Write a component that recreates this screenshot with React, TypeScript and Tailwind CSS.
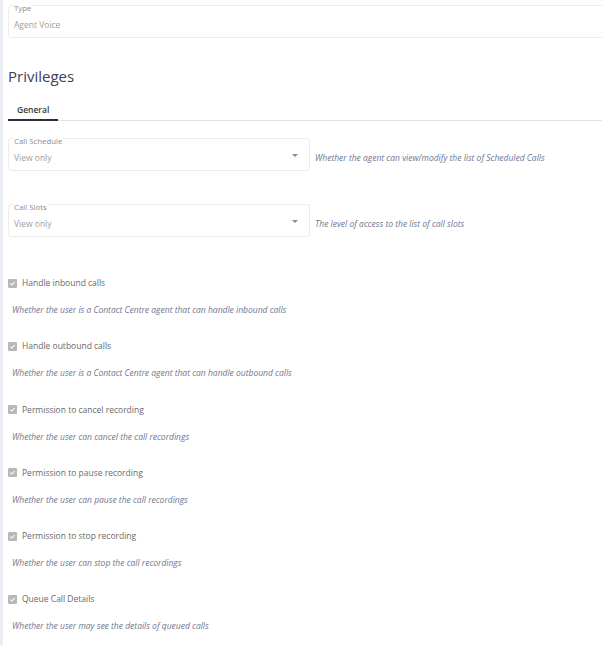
const font = "font-['Open_Sans',_'Noto_Sans',_sans-serif]";

const privileges = [
  { name: "Handle inbound calls", help: "Whether the user is a Contact Centre agent that can handle inbound calls" },
  { name: "Handle outbound calls", help: "Whether the user is a Contact Centre agent that can handle outbound calls" },
  { name: "Permission to cancel recording", help: "Whether the user can cancel the call recordings" },
  { name: "Permission to pause recording", help: "Whether the user can pause the call recordings" },
  { name: "Permission to stop recording", help: "Whether the user can stop the call recordings" },
  { name: "Queue Call Details", help: "Whether the user may see the details of queued calls" },
];

const selects = [
  { label: "Call Schedule", value: "View only", help: "Whether the agent can view/modify the list of Scheduled Calls", mt: "mt-[12px]" },
  { label: "Call Slots", value: "View only", help: "The level of access to the list of call slots", mt: "mt-[28px]" },
];

function Field({ label, value, arrow, className }: { label: string; value: string; arrow?: boolean; className?: string }) {
  return (
    <fieldset className={`min-w-0 rounded-[3px] border border-[#ececec] px-[5px] pb-[6px] ${className ?? ""}`}>
      <legend className="-ml-[1px] px-[1px] text-[7.8px] leading-[10px] text-[#8c8c8c]">
        <span className="relative top-[3px]">{label}</span>
      </legend>
      <div className="mt-[9px] flex items-center justify-between text-[8.5px] leading-[12px] text-[#a0a0a0]">
        <span>{value}</span>
        {arrow && (
          <svg width="6" height="3" viewBox="0 0 6 3" className="mr-[6px] -mt-[6px]">
            <path d="M0 0h6L3 3z" fill="#8a8a8a" />
          </svg>
        )}
      </div>
    </fieldset>
  );
}

function Check() {
  return (
    <span className="flex h-[9px] w-[9px] items-center justify-center rounded-[1px] bg-[#b8b8b8]">
      <svg width="7" height="7" viewBox="0 0 10 10">
        <path d="M2 5.2l2 2L8 3" fill="none" stroke="#fff" strokeWidth="1.6" />
      </svg>
    </span>
  );
}

export default function App() {
  return (
    <div className={`flex min-h-[645px] w-[602px] overflow-hidden bg-white ${font}`}>
      <div className="w-[3px] shrink-0 bg-[#e9edf3]" />
      <div className="flex-1 pl-[5px]">
        <Field label="Type" value="Agent Voice" className="-mr-[4px]" />

        <h2 className="mt-[28px] text-[15px] leading-[20px] text-[#3b4256]">Privileges</h2>

        <div className="mt-[18px] flex border-b border-[#e2e2e2]">
          <div className="-mb-px border-b-2 border-[#2a2e38] px-[9px] pb-[3px] text-[8.5px] font-semibold leading-[12px] text-[#33373f]">
            General
          </div>
        </div>

        {selects.map((s) => (
          <div key={s.label} className={`flex items-end ${s.mt}`}>
            <Field label={s.label} value={s.value} arrow className="w-[302px] shrink-0" />
            <p className="mb-[7px] ml-[5px] text-[8.5px] italic leading-[12px] text-[#6f7690]">{s.help}</p>
          </div>
        ))}

        <div className="mt-[39px] flex flex-col gap-[22.3px]">
          {privileges.map((p) => (
            <div key={p.name}>
              <label className="flex items-center gap-[5px] text-[8.5px] leading-[14px] text-[#6a6a6a]">
                <Check />
                {p.name}
              </label>
              <p className="mt-[13px] pl-[4px] text-[8.5px] italic leading-[14px] text-[#6f7690]">{p.help}</p>
            </div>
          ))}
        </div>
      </div>
    </div>
  );
}
